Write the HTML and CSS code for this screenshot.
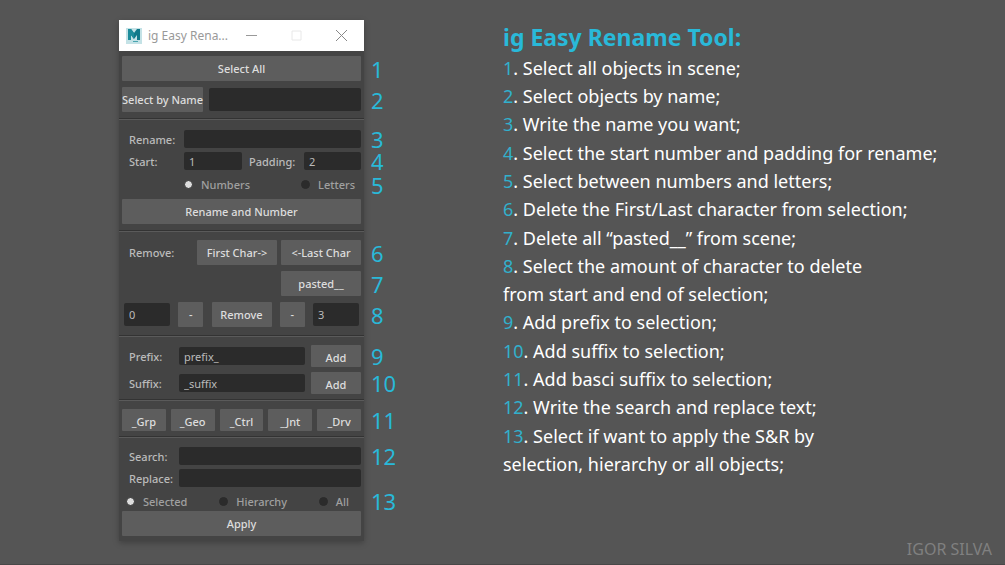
FILE: index.html
```
<!DOCTYPE html>
<html lang="en">
<head>
	<meta charset="utf-8">
	<title>ig Easy Rename Tool</title>
	<link rel="stylesheet" href="styles.css">
</head>
<body>

	<main>
		<form class="window">
			<header class="titlebar">
				<svg class="logo" viewBox="0 0 16 16" width="16" height="16">
					<rect width="16" height="16" fill="#c4e2e6"/>
					<path d="M2 1h3l3 4 3-4h3v11h-3V7l-3 4-3-4v5H2z" fill="#10798a"/>
					<path d="M2 1h3l3 4v6L5 7v5H2z" fill="#1c8c9b"/>
					<path d="M7 13.500h5" stroke="#4aa5b0"/>
				</svg>
				<span class="caption">ig Easy Rena...</span>
				<button type="button" class="winbtn" aria-label="Minimize"><svg width="11" height="11"><path d="M0 5.500h11" stroke="#999"/></svg></button>
				<button type="button" class="winbtn" aria-label="Maximize" disabled><svg width="11" height="11"><path d="M1 1h9v9H1z" fill="none" stroke="#e8e8e8"/></svg></button>
				<button type="button" class="winbtn" aria-label="Close"><svg width="11" height="11"><path d="M0 0l11 11M11 0l-11 11" stroke="#888"/></svg></button>
			</header>

			<section class="select">
				<div class="row"><button type="button" class="wide">Select All</button><b class="mark">1</b></div>
				<div class="row by-name">
					<button type="button">Select by Name</button>
					<input type="text" aria-label="Name to select">
					<b class="mark">2</b>
				</div>
			</section>

			<section class="rename">
				<div class="row pair">
					<label for="newname">Rename:</label>
					<input type="text" id="newname">
					<b class="mark">3</b>
				</div>
				<div class="row numbering">
					<label for="start">Start:</label>
					<input type="text" id="start" value="1">
					<label for="padding">Padding:</label>
					<input type="text" id="padding" value="2">
					<b class="mark">4</b>
				</div>
				<div class="row radios kind">
					<label><input type="radio" name="kind" checked>Numbers</label>
					<label><input type="radio" name="kind">Letters</label>
					<b class="mark">5</b>
				</div>
				<div class="row"><button type="button" class="wide">Rename and Number</button></div>
			</section>

			<section class="remove">
				<div class="row chars">
					<span>Remove:</span>
					<button type="button">First Char-&gt;</button>
					<button type="button">&lt;-Last Char</button>
					<b class="mark">6</b>
				</div>
				<div class="row chars">
					<button type="button" class="pasted">pasted__</button>
					<b class="mark">7</b>
				</div>
				<div class="row amount">
					<input type="text" value="0" aria-label="From start">
					<button type="button">-</button>
					<button type="button">Remove</button>
					<button type="button">-</button>
					<input type="text" value="3" aria-label="From end">
					<b class="mark">8</b>
				</div>
			</section>

			<section class="affix">
				<div class="row">
					<label for="prefix">Prefix:</label>
					<input type="text" id="prefix" value="prefix_">
					<button type="button">Add</button>
					<b class="mark">9</b>
				</div>
				<div class="row">
					<label for="suffix">Suffix:</label>
					<input type="text" id="suffix" value="_suffix">
					<button type="button">Add</button>
					<b class="mark">10</b>
				</div>
			</section>

			<section class="basic">
				<div class="row">
					<button type="button">_Grp</button>
					<button type="button">_Geo</button>
					<button type="button">_Ctrl</button>
					<button type="button">_Jnt</button>
					<button type="button">_Drv</button>
					<b class="mark">11</b>
				</div>
			</section>

			<section class="replace">
				<div class="row pair">
					<label for="search">Search:</label>
					<input type="text" id="search">
					<b class="mark">12</b>
				</div>
				<div class="row pair">
					<label for="replace">Replace:</label>
					<input type="text" id="replace">
				</div>
				<div class="row radios scope">
					<label><input type="radio" name="scope" checked>Selected</label>
					<label><input type="radio" name="scope">Hierarchy</label>
					<label><input type="radio" name="scope">All</label>
					<b class="mark">13</b>
				</div>
				<div class="row"><button type="button" class="wide">Apply</button></div>
			</section>
		</form>

		<article class="notes">
			<h1>ig Easy Rename Tool:</h1>
			<ul>
				<li><span>1</span>. Select all objects in scene;</li>
				<li><span>2</span>. Select objects by name;</li>
				<li><span>3</span>. Write the name you want;</li>
				<li><span>4</span>. Select the start number and padding for rename;</li>
				<li><span>5</span>. Select between numbers and letters;</li>
				<li><span>6</span>. Delete the First/Last character from selection;</li>
				<li><span>7</span>. Delete all “pasted__” from scene;</li>
				<li><span>8</span>. Select the amount of character to delete<br>from start and end of selection;</li>
				<li><span>9</span>. Add prefix to selection;</li>
				<li><span>10</span>. Add suffix to selection;</li>
				<li><span>11</span>. Add basci suffix to selection;</li>
				<li><span>12</span>. Write the search and replace text;</li>
				<li><span>13</span>. Select if want to apply the S&amp;R by<br>selection, hierarchy or all objects;</li>
			</ul>
		</article>
	</main>

	<footer>IGOR SILVA</footer>

</body>
</html>
```

FILE: styles.css
```
* {
	box-sizing: border-box;
}

body {
	margin: 0;
	min-height: 100vh;
	background: #555;
	border-bottom: 1px solid #484848;
	color: #fff;
	font-family: "Noto Sans", "Open Sans", sans-serif;
}

main {
	display: grid;
	grid-template-columns: 245px 1fr;
	column-gap: 139px;
	align-items: start;
	padding: 20px 0 0 119px;
}

/* tool window */

.window {
	background: #444;
	color: #bbb;
	font-size: 11px;
	font-weight: 500;
	box-shadow: 0 2px 6px rgba(0, 0, 0, 0.25);
}

.titlebar {
	display: flex;
	align-items: center;
	height: 31px;
	padding-left: 7px;
	background: #fff;
}

.caption {
	flex: 1;
	padding-left: 6px;
	color: #999;
	font-size: 12px;
	font-weight: 400;
}

.titlebar .winbtn {
	display: flex;
	align-items: center;
	justify-content: center;
	width: 45px;
	height: 30px;
	background: none;
}

section {
	display: flex;
	flex-direction: column;
	gap: 4px;
	padding: 8px 3px 5px;
}

/* groove between the groups */
section + section {
	border-top: 1px solid #333;
	box-shadow: inset 0 1px #5a5a5a;
	padding-top: 9px;
}

section.select {
	gap: 6px;
	padding: 5px 3px 6px;
}

section.rename {
	padding-top: 11px;
	padding-bottom: 6px;
}

section.remove {
	gap: 6px;
	padding-bottom: 8px;
}

section.affix {
	gap: 5px;
}

section.replace {
	padding-top: 10px;
}

.row {
	display: flex;
	align-items: center;
	position: relative;
}

button {
	height: 25px;
	padding: 0;
	border: 0;
	border-radius: 1px;
	background: #5d5d5d;
	color: #ddd;
	font: inherit;
	white-space: nowrap;
}

input[type="text"] {
	width: 100%;
	min-width: 0;
	height: 18px;
	padding: 0 5px;
	border: 0;
	border-radius: 2px;
	background: #2b2b2b;
	color: #bbb;
	font: inherit;
	font-weight: 400;
}

.wide {
	width: 100%;
}

/* callout number beside its row */
.mark {
	position: absolute;
	left: 100%;
	top: 50%;
	margin-left: 10px;
	transform: translateY(-50%);
	color: #29b9d9;
	font-size: 22px;
	font-weight: 400;
	line-height: 18px;
}

.by-name {
	gap: 6px;
}

.by-name button {
	flex: 0 0 81px;
}

.by-name input[type="text"] {
	height: 23px;
}

.pair,
.numbering {
	display: grid;
	padding-left: 7px;
}

.rename .pair {
	grid-template-columns: 55px 1fr;
}

.replace .pair {
	grid-template-columns: 50px 1fr;
}

.numbering {
	grid-template-columns: 55px 58px 62px 1fr;
}

#start + label {
	padding-left: 7px;
}

.radios {
	height: 21px;
	color: #a0a0a0;
}

.radios label {
	display: flex;
	align-items: center;
	gap: 8px;
}

.radios input {
	appearance: none;
	width: 9px;
	height: 9px;
	margin: 0;
	border: 1px solid #2b2b2b;
	border-radius: 50%;
	background: #2b2b2b;
}

.radios input:checked {
	background: #ddd;
	border-color: #333;
}

.kind {
	justify-content: space-between;
	padding: 0 6px 0 62px;
}

.scope {
	height: 20px;
	justify-content: space-between;
	padding: 0 12px 0 4px;
}

.replace .scope {
	margin-bottom: -4px;
}

.chars {
	justify-content: flex-end;
	gap: 4px;
	padding-left: 7px;
}

.chars span {
	flex: 1;
}

.chars button {
	flex: 0 0 80px;
}

.amount {
	justify-content: space-between;
	padding: 0 2px;
}

.amount input[type="text"] {
	flex: 0 0 46px;
	height: 23px;
}

.amount button {
	flex: 0 0 25px;
}

.amount button:nth-of-type(2) {
	flex-basis: 60px;
}

.affix .row {
	display: grid;
	grid-template-columns: 50px 1fr 50px;
	padding-left: 7px;
}

.affix input[type="text"] {
	width: calc(100% - 6px);
}

.affix button,
.basic button {
	height: 22px;
	padding-top: 3px;
}

.basic .row {
	gap: 5px;
}

.basic button {
	flex: 1;
}

/* notes */

h1 {
	margin: 0;
	color: #29b9d9;
	font-size: 23px;
	line-height: 34px;
}

.notes ul {
	margin: 0;
	padding: 0;
	list-style: none;
	font-size: 18px;
	line-height: 28px;
}

.notes li:nth-child(3n) {
	margin-bottom: 1px;
}

.notes li span {
	color: #31b0cc;
}

footer {
	padding-right: 13px;
	color: #808080;
	font-size: 16px;
	line-height: 16px;
	text-align: right;
}
```
